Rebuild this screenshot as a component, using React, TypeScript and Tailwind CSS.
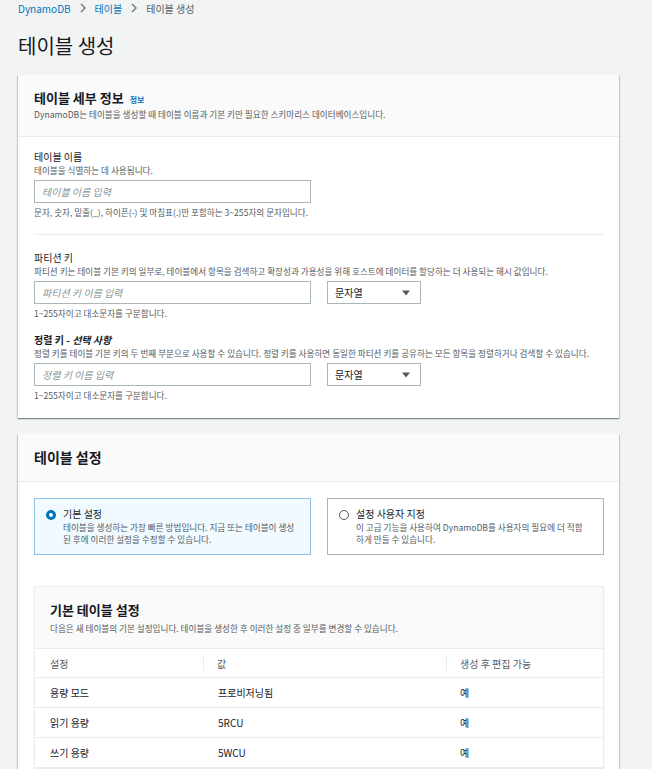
const font = { fontFamily: '"Noto Sans CJK KR", "Noto Sans", sans-serif' };

function Caret() {
  return (
    <svg width="8" height="6" viewBox="0 0 8 6" className="shrink-0">
      <path d="M0 0.5h8L4 5.5z" fill="#545b64" />
    </svg>
  );
}

function Field({
  label,
  desc,
  placeholder,
  help,
  select,
}: {
  label: React.ReactNode;
  desc: string;
  placeholder: string;
  help: string;
  select?: boolean;
}) {
  return (
    <div>
      <div className="text-[10px] leading-[14px] text-[#16191f]">{label}</div>
      <div className="text-[8.6px] leading-[12px] text-[#545b64] whitespace-nowrap">{desc}</div>
      <div className="mt-1 flex gap-4">
        <div className="h-[23px] w-[277px] border border-[#aab7b8] bg-white px-[7px] flex items-center text-[10px] italic text-[#879596]">
          {placeholder}
        </div>
        {select && (
          <div className="h-[23px] w-[94px] border border-[#aab7b8] bg-white pl-[7px] pr-[10px] flex items-center justify-between text-[10px] text-[#16191f]">
            문자열
            <Caret />
          </div>
        )}
      </div>
      <div className="mt-[3px] text-[8.6px] leading-[12px] text-[#545b64]">{help}</div>
    </div>
  );
}

function RadioCard({
  selected,
  title,
  lines,
}: {
  selected?: boolean;
  title: string;
  lines: string[];
}) {
  return (
    <div
      className={
        selected
          ? "h-[57px] border border-[#8ec3e6] bg-[#f1faff] pl-[11px] pt-[8px]"
          : "h-[57px] border border-[#aab7b8] bg-white pl-[11px] pt-[8px]"
      }
    >
      <div className="flex items-start gap-[7px]">
        {selected ? (
          <span className="mt-[3px] h-[10px] w-[10px] rounded-full border-[3px] border-[#0073bb] bg-white shrink-0" />
        ) : (
          <span className="mt-[3px] h-[10px] w-[10px] rounded-full border border-[#545b64] bg-white shrink-0" />
        )}
        <div>
          <div className="text-[10px] leading-[14px] text-[#16191f]">{title}</div>
          {lines.map((l) => (
            <div key={l} className="text-[8.6px] leading-[12px] text-[#545b64] whitespace-nowrap">
              {l}
            </div>
          ))}
        </div>
      </div>
    </div>
  );
}

const rows = [
  ["용량 모드", "프로비저닝됨", "예"],
  ["읽기 용량", "5RCU", "예"],
  ["쓰기 용량", "5WCU", "예"],
];

const card = "bg-white shadow-[0_1px_1px_0_rgba(0,28,36,0.3),1px_1px_1px_0_rgba(0,28,36,0.15),-1px_1px_1px_0_rgba(0,28,36,0.15)]";

export default function App() {
  return (
    <div style={font} className="h-[769px] overflow-hidden bg-[#f2f3f3] px-[18px]">
      <div className="flex h-4 items-center gap-[9px] text-[10px] text-[#0073bb]">
        <span>DynamoDB</span>
        <svg width="6" height="10" viewBox="0 0 6 10">
          <path d="M1 1l4 4-4 4" stroke="#687078" strokeWidth="1.3" fill="none" />
        </svg>
        <span>테이블</span>
        <svg width="6" height="10" viewBox="0 0 6 10">
          <path d="M1 1l4 4-4 4" stroke="#687078" strokeWidth="1.3" fill="none" />
        </svg>
        <span className="text-[#545b64]">테이블 생성</span>
      </div>

      <h1 className="mt-4 text-[20px] leading-[28px] text-[#16191f]">테이블 생성</h1>

      <div className={`mt-[15px] w-[601px] ${card}`}>
        <div className="border-b border-[#eaeded] bg-[#fafafa] px-4 pt-[14px] pb-[15px]">
          <div className="flex items-baseline gap-[6px]">
            <span className="text-[13px] leading-[18px] font-bold text-[#16191f]">테이블 세부 정보</span>
            <span className="text-[8px] font-bold text-[#0073bb]">정보</span>
          </div>
          <div className="mt-[1px] text-[8.6px] leading-[13px] text-[#545b64]">
            DynamoDB는 테이블을 생성할 때 테이블 이름과 기본 키만 필요한 스키마리스 데이터베이스입니다.
          </div>
        </div>
        <div className="pl-4 pr-[15px] pt-[13px] pb-[17px]">
          <Field
            label="테이블 이름"
            desc="테이블을 식별하는 데 사용됩니다."
            placeholder="테이블 이름 입력"
            help="문자, 숫자, 밑줄(_), 하이픈(-) 및 마침표(.)만 포함하는 3~255자의 문자입니다."
          />
          <div className="mt-4 mb-4 border-t border-[#eaeded]" />
          <Field
            label="파티션 키"
            desc="파티션 키는 테이블 기본 키의 일부로, 테이블에서 항목을 검색하고 확장성과 가용성을 위해 호스트에 데이터를 할당하는 더 사용되는 해시 값입니다."
            placeholder="파티션 키 이름 입력"
            help="1~255자이고 대소문자를 구분합니다."
            select
          />
          <div className="mt-[14px]">
            <Field
              label={
                <>
                  <span className="font-bold">정렬 키 - </span>
                  <span className="font-bold italic">선택 사항</span>
                </>
              }
              desc="정렬 키를 테이블 기본 키의 두 번째 부분으로 사용할 수 있습니다. 정렬 키를 사용하면 동일한 파티션 키를 공유하는 모든 항목을 정렬하거나 검색할 수 있습니다."
              placeholder="정렬 키 이름 입력"
              help="1~255자이고 대소문자를 구분합니다."
              select
            />
          </div>
        </div>
      </div>

      <div className={`mt-4 w-[601px] ${card}`}>
        <div className="flex h-[48px] items-center border-b border-[#eaeded] bg-[#fafafa] px-4">
          <span className="text-[14px] font-bold text-[#16191f]">테이블 설정</span>
        </div>
        <div className="pl-4 pr-[15px] pt-4">
          <div className="grid grid-cols-2 gap-4">
            <RadioCard
              selected
              title="기본 설정"
              lines={[
                "테이블을 생성하는 가장 빠른 방법입니다. 지금 또는 테이블이 생성",
                "된 후에 이러한 설정을 수정할 수 있습니다.",
              ]}
            />
            <RadioCard
              title="설정 사용자 지정"
              lines={[
                "이 고급 기능을 사용하여 DynamoDB를 사용자의 필요에 더 적합",
                "하게 만들 수 있습니다.",
              ]}
            />
          </div>

          <div className="mt-[31px] border border-[#eaeded] shadow-[0_1px_1px_0_rgba(0,28,36,0.15)]">
            <div className="h-[62px] border-b border-[#eaeded] bg-[#fafafa] px-[15px] pt-[14px]">
              <div className="text-[13px] leading-[18px] font-bold text-[#16191f]">기본 테이블 설정</div>
              <div className="mt-[3px] text-[8.6px] leading-[12px] text-[#545b64]">
                다음은 새 테이블의 기본 설정입니다. 테이블을 생성한 후 이러한 설정 중 일부를 변경할 수 있습니다.
              </div>
            </div>
            <div className="grid grid-cols-[169px_243px_1fr] h-[29px] items-center border-b border-[#eaeded] text-[10px] text-[#545b64]">
              <div className="pl-[15px] border-r border-[#eaeded] h-[15px] leading-[15px]">설정</div>
              <div className="pl-[13px] border-r border-[#eaeded] h-[15px] leading-[15px]">값</div>
              <div className="pl-[13px]">생성 후 편집 가능</div>
            </div>
            {rows.map((r) => (
              <div
                key={r[0]}
                className="grid grid-cols-[169px_243px_1fr] h-[30px] items-center border-b border-[#eaeded] text-[10px] text-[#16191f]"
              >
                <div className="pl-[15px]">{r[0]}</div>
                <div className="pl-[14px]">{r[1]}</div>
                <div className="pl-[13px]">{r[2]}</div>
              </div>
            ))}
          </div>
        </div>
      </div>
    </div>
  );
}
